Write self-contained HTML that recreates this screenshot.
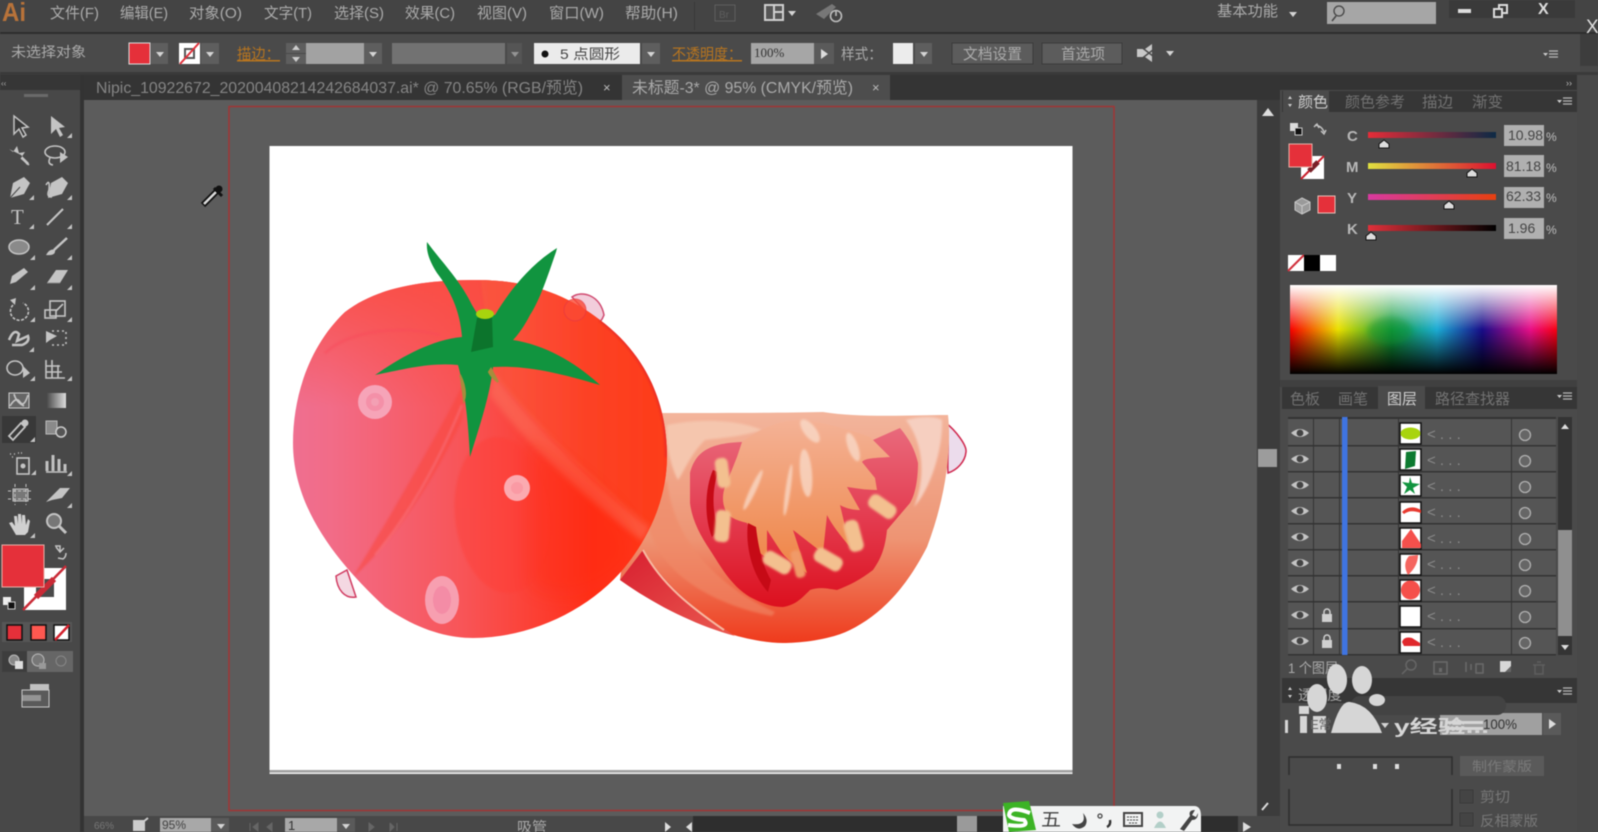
<!DOCTYPE html>
<html><head><meta charset="utf-8"><style>
html,body{margin:0;padding:0;background:#484848;overflow:hidden}
svg{display:block;width:1598px;height:832px;filter:blur(.5px)}
text{font-family:"Liberation Sans","Noto Sans CJK SC",sans-serif}
.m{fill:#ababab;font-size:15px}
.o{fill:#b8751f;font-size:15px;text-decoration:underline}
.p{fill:#727272;font-size:15px}
.i{stroke:#c4c4c4;stroke-width:1.6;fill:none}
.f{fill:#c4c4c4}
.lb{fill:#b8b8b8;font-size:15px;font-weight:bold;font-family:"Liberation Serif",serif}
.v{fill:#444;font-size:14px;font-family:"Liberation Mono",monospace}
.d{fill:#a0a0a0;font-size:16px}
</style></head><body>
<svg xmlns="http://www.w3.org/2000/svg" viewBox="0 0 1598 832" width="1598" height="832">
<defs>
<linearGradient id="body" x1="0" x2="1" y1="0" y2="0"><stop offset="0" stop-color="#ef6f90"/><stop offset=".1" stop-color="#f26c88"/><stop offset=".45" stop-color="#f85558"/><stop offset=".8" stop-color="#ff2f18"/><stop offset="1" stop-color="#ff3a18"/></linearGradient>
<linearGradient id="lobe" x1="0" x2="1" y1="0" y2="0"><stop offset="0" stop-color="#fa5a40"/><stop offset="1" stop-color="#fd3c18"/></linearGradient>
<linearGradient id="topfade" x1="0" x2="0" y1="0" y2="1"><stop offset="0" stop-color="#fb4c40" stop-opacity=".85"/><stop offset="1" stop-color="#fb4c40" stop-opacity="0"/></linearGradient>
<linearGradient id="slice" x1="0" x2="0" y1="0" y2="1"><stop offset="0" stop-color="#f3b59c"/><stop offset=".55" stop-color="#ee9473"/><stop offset="1" stop-color="#ef3a1c"/></linearGradient>
<linearGradient id="flesh" x1="0" x2="0" y1="0" y2="1"><stop offset="0" stop-color="#e96a7c"/><stop offset=".5" stop-color="#e43c50"/><stop offset="1" stop-color="#dc101e"/></linearGradient>
<linearGradient id="core" x1="0" x2="0" y1="0" y2="1"><stop offset="0" stop-color="#f4b296"/><stop offset="1" stop-color="#ef8444"/></linearGradient>
<linearGradient id="rim" x1="0" x2="1" y1="0" y2="1"><stop offset="0" stop-color="#d81f30"/><stop offset="1" stop-color="#ea5a50"/></linearGradient>
<linearGradient id="rb" x1="0" x2="1" y1="0" y2="0"><stop offset="0" stop-color="#f80000"/><stop offset=".18" stop-color="#eae000"/><stop offset=".38" stop-color="#109a3a"/><stop offset=".55" stop-color="#1cacd4"/><stop offset=".72" stop-color="#180c88"/><stop offset=".9" stop-color="#e80f88"/><stop offset="1" stop-color="#f80010"/></linearGradient>
<linearGradient id="wh" x1="0" x2="0" y1="0" y2="1"><stop offset="0" stop-color="#fff"/><stop offset=".5" stop-color="#fff" stop-opacity="0"/></linearGradient>
<linearGradient id="bk" x1="0" x2="0" y1="0" y2="1"><stop offset=".5" stop-color="#000" stop-opacity="0"/><stop offset="1" stop-color="#000"/></linearGradient>
<linearGradient id="sC" x1="0" x2="1"><stop offset="0" stop-color="#e62c38"/><stop offset="1" stop-color="#0d2a45"/></linearGradient>
<linearGradient id="sM" x1="0" x2="1"><stop offset="0" stop-color="#e0e040"/><stop offset="1" stop-color="#dd1030"/></linearGradient>
<linearGradient id="sY" x1="0" x2="1"><stop offset="0" stop-color="#d83aa0"/><stop offset="1" stop-color="#e64010"/></linearGradient>
<linearGradient id="sK" x1="0" x2="1"><stop offset="0" stop-color="#e0303a"/><stop offset="1" stop-color="#000"/></linearGradient>
<linearGradient id="gr" x1="0" x2="1"><stop offset="0" stop-color="#444"/><stop offset="1" stop-color="#ddd"/></linearGradient>
<filter id="b3" x="-30%" y="-30%" width="160%" height="160%"><feGaussianBlur stdDeviation="3"/></filter>
<filter id="b1" x="-30%" y="-30%" width="160%" height="160%"><feGaussianBlur stdDeviation="1"/></filter>
<filter id="b8" x="-30%" y="-30%" width="160%" height="160%"><feGaussianBlur stdDeviation="8"/></filter>
<clipPath id="cb"><path d="M477 280C430 280 380 285 345 312C310 345 293 395 293 443C293 510 340 565 385 607C415 628 445 638 473 638C530 638 590 610 625 567C655 530 667 490 667 457C667 395 640 350 600 320C565 293 525 280 477 280Z"/></clipPath>
<clipPath id="cv"><rect x="1504" y="120" width="40" height="125"/></clipPath>
<path id="t" d="M0 5L5 0V5Z" fill="#c4c4c4"/>
<g id="eye"><path d="M-9 0Q0 -8 9 0Q0 8 -9 0Z" fill="#c4c4c4"/><circle r="3.4" fill="#444"/></g>
<g id="rad"><circle r="5.500" fill="#666" stroke="#b0b0b0" stroke-width="1.3"/></g>
<g id="lk"><rect x="-5" y="-2" width="10" height="8" fill="#d0d0d0"/><path d="M-3 -2V-4A3 3 0 0 1 3 -4V-2" stroke="#d0d0d0" stroke-width="1.500" fill="none"/></g>
<path id="dn" d="M-4 -2H4L0 3Z" fill="#d4d4d4"/>
<g id="mn"><path d="M-9 -2H-4L-6.5 1Z" fill="#ccc"/><path d="M-3 -4H6M-3 -1H6M-3 2H6" stroke="#b8b8b8" stroke-width="1.2"/></g>
</defs>

<!-- base -->
<rect width="1598" height="832" fill="#484848"/>
<rect width="1598" height="33" fill="#444"/>
<rect y="32" width="1598" height="2" fill="#2e2e2e"/>
<rect y="34" width="1580" height="40" fill="#4a4a4a"/>
<rect y="72" width="1598" height="3" fill="#3a3a3a"/>
<rect x="1580" y="34" width="18" height="32" fill="#3d3d3d"/>

<!-- menu -->
<text x="2" y="21" font-size="26" fill="#b8733a" font-weight="bold" textLength="24" lengthAdjust="spacingAndGlyphs">Ai</text>
<g class="m">
<text x="50" y="18" textLength="49" lengthAdjust="spacingAndGlyphs">文件(F)</text>
<text x="120" y="18" textLength="48" lengthAdjust="spacingAndGlyphs">编辑(E)</text>
<text x="189" y="18" textLength="53" lengthAdjust="spacingAndGlyphs">对象(O)</text>
<text x="264" y="18" textLength="48" lengthAdjust="spacingAndGlyphs">文字(T)</text>
<text x="334" y="18" textLength="50" lengthAdjust="spacingAndGlyphs">选择(S)</text>
<text x="405" y="18" textLength="50" lengthAdjust="spacingAndGlyphs">效果(C)</text>
<text x="477" y="18" textLength="50" lengthAdjust="spacingAndGlyphs">视图(V)</text>
<text x="549" y="18" textLength="55" lengthAdjust="spacingAndGlyphs">窗口(W)</text>
<text x="625" y="18" textLength="53" lengthAdjust="spacingAndGlyphs">帮助(H)</text>
</g>
<rect x="694" y="2" width="1" height="28" fill="#383838"/>
<rect x="715" y="5" width="20" height="16" fill="none" stroke="#5e5e5e"/>
<text x="719" y="18" font-size="10" fill="#5e5e5e">Br</text>
<rect x="764" y="4" width="20" height="17" fill="#cfcfcf"/><rect x="766" y="6" width="7" height="13" fill="#555"/><rect x="775" y="6" width="7" height="5" fill="#555"/><rect x="775" y="13" width="7" height="6" fill="#555"/>
<use href="#dn" x="792" y="13"/>
<path d="M816 14L832 4L836 7L824 19Z" fill="#777"/><circle cx="836" cy="16" r="5.5" fill="none" stroke="#bdbdbd" stroke-width="1.6"/><path d="M836 10V16" stroke="#bdbdbd" stroke-width="1.6"/>
<text x="1217" y="16" class="m" textLength="61" lengthAdjust="spacingAndGlyphs">基本功能</text>
<use href="#dn" x="1293" y="14"/>
<rect x="1327" y="2" width="109" height="22" fill="#a6a6a6"/>
<circle cx="1339" cy="11" r="5" fill="none" stroke="#444" stroke-width="1.3"/><path d="M1336 16L1332 21" stroke="#444" stroke-width="1.5"/>
<rect x="1449" y="0" width="126" height="18" fill="#3a3a3a"/>
<rect x="1458" y="9" width="13" height="4" fill="#ddd"/>
<rect x="1499" y="5" width="8" height="8" fill="none" stroke="#ddd" stroke-width="2"/><rect x="1494" y="9" width="8" height="8" fill="#3a3a3a" stroke="#ddd" stroke-width="2"/>
<text x="1538" y="14" font-size="16" fill="#ddd" font-weight="bold">X</text>
<text x="1586" y="33" font-size="19" fill="#ddd">X</text>

<!-- options -->
<text x="11" y="57" class="m" textLength="75" lengthAdjust="spacingAndGlyphs" style="font-size:14px">未选择对象</text>
<rect x="129" y="43" width="21" height="21" fill="#e5303a" stroke="#ddd"/>
<rect x="151" y="43" width="17" height="21" fill="#5e5e5e"/><use href="#dn" x="160" y="54"/>
<rect x="179" y="43" width="21" height="21" fill="#fff"/>
<rect x="185" y="49" width="9" height="9" fill="none" stroke="#555" stroke-width="2"/><path d="M180 64L199 43" stroke="#e0303a" stroke-width="2"/>
<rect x="201" y="43" width="18" height="21" fill="#5e5e5e"/><use href="#dn" x="210" y="54"/>
<text x="237" y="59" class="o" textLength="43" lengthAdjust="spacingAndGlyphs">描边：</text>
<rect x="286" y="43" width="20" height="10" fill="#5e5e5e"/><rect x="286" y="54" width="20" height="10" fill="#5e5e5e"/>
<path d="M292 50L296 45L300 50Z" fill="#ccc"/><path d="M292 57L296 62L300 57Z" fill="#ccc"/>
<rect x="306" y="43" width="58" height="21" fill="#a2a2a2"/>
<rect x="364" y="43" width="18" height="21" fill="#5e5e5e"/><use href="#dn" x="373" y="54"/>
<rect x="392" y="43" width="113" height="21" fill="#727272"/>
<rect x="507" y="43" width="15" height="21" fill="#555"/><use href="#dn" x="515" y="54" opacity=".5"/>
<rect x="534" y="43" width="106" height="21" fill="#ebebeb"/>
<circle cx="545" cy="54" r="3.5" fill="#111"/>
<text x="560" y="59" font-size="14" fill="#444" textLength="60" lengthAdjust="spacingAndGlyphs">5 点圆形</text>
<rect x="642" y="43" width="18" height="21" fill="#5e5e5e"/><use href="#dn" x="651" y="54"/>
<text x="672" y="59" class="o" textLength="70" lengthAdjust="spacingAndGlyphs">不透明度：</text>
<rect x="751" y="43" width="63" height="21" fill="#a6a6a6"/>
<text x="754" y="57" font-size="13" fill="#333" style="font-family:'Liberation Serif',serif">100%</text>
<rect x="814" y="43" width="20" height="21" fill="#5a5a5a"/><path d="M821 49L828 54L821 59Z" fill="#ddd"/>
<text x="841" y="59" class="m" textLength="41" lengthAdjust="spacingAndGlyphs">样式：</text>
<rect x="893" y="43" width="20" height="21" fill="#ececec"/>
<rect x="915" y="43" width="17" height="21" fill="#5e5e5e"/><use href="#dn" x="924" y="54"/>
<rect x="952" y="43" width="81" height="21" fill="#5c5c5c" stroke="#3a3a3a"/>
<text x="963" y="59" class="m" textLength="59" lengthAdjust="spacingAndGlyphs">文档设置</text>
<rect x="1042" y="43" width="80" height="21" fill="#5c5c5c" stroke="#3a3a3a"/>
<text x="1061" y="59" class="m" textLength="44" lengthAdjust="spacingAndGlyphs">首选项</text>
<path d="M1137 49H1145L1152 44V62L1145 57H1137Z" fill="#c8c8c8"/><path d="M1140 46L1158 60M1158 46L1140 60" stroke="#4a4a4a" stroke-width="1.5"/>
<use href="#dn" x="1170" y="53"/>
<use href="#mn" x="1552" y="55"/>

<!-- toolbar column -->
<rect x="0" y="75" width="80" height="757" fill="#484848"/>
<rect x="0" y="75" width="80" height="15" fill="#363636"/>
<text x="1" y="86" font-size="8" fill="#aaa">‹‹</text>
<rect x="24" y="94" width="24" height="3" fill="#6a6a6a"/>
<rect x="80" y="75" width="4" height="757" fill="#333"/>

<!-- tabs -->
<rect x="84" y="75" width="1196" height="26" fill="#343434"/>
<text x="96" y="93" class="d" style="fill:#858585" textLength="487" lengthAdjust="spacingAndGlyphs">Nipic_10922672_20200408214242684037.ai* @ 70.65% (RGB/预览)</text>
<text x="603" y="92" font-size="13" fill="#bbb">×</text>
<rect x="622" y="75" width="268" height="25" fill="#4d4d4d"/>
<text x="632" y="93" class="d" textLength="221" lengthAdjust="spacingAndGlyphs" style="fill:#aaa">未标题-3* @ 95% (CMYK/预览)</text>
<text x="872" y="92" font-size="13" fill="#bbb">×</text>

<!-- canvas -->
<rect x="84" y="100" width="1173" height="716" fill="#5c5c5c"/>
<rect x="229" y="106.5" width="885" height="704" fill="none" stroke="#a23434" stroke-width="1.5"/>
<rect x="269.5" y="146" width="803" height="625" fill="#fff"/>
<rect x="269.5" y="770" width="803" height="2.5" fill="#a0a0a0"/>
<rect x="269.5" y="772.5" width="803" height="1.5" fill="#eee"/>

<!-- slice -->
<path d="M946 423C955 430 967 445 966 452C965 462 957 470 948 473C947 455 950 440 946 423Z" fill="#ecdcec" stroke="#d02a50" stroke-width="1.5"/>
<path d="M640 413L665 413C720 413 780 413 823 412C860 418 910 415 948 415C952 450 945 500 927 547C905 590 880 615 850 630C830 640 800 643 783 643C745 643 680 622 620 580Z" fill="url(#slice)"/>
<path d="M620 580L643 550C665 585 695 610 735 636C695 625 655 605 620 580Z" fill="url(#rim)"/>
<path d="M643 550C662 585 692 608 724 630" stroke="#f7b8a0" stroke-width="2" fill="none"/>
<path d="M667 480C672 530 705 580 775 612L772 616C715 605 660 575 648 525C650 505 660 490 667 480Z" fill="#f08a68" opacity=".6" filter="url(#b1)"/>
<path d="M667 425C700 418 740 420 762 430C740 437 720 438 705 440C690 455 685 470 678 480C670 465 665 440 667 425Z" fill="#f5c6ae" filter="url(#b1)"/>
<path d="M906 420C920 416 935 416 942 420C943 450 930 490 914 507C925 480 925 445 906 420Z" fill="#f6cfc0" filter="url(#b1)"/>
<path d="M690 473C695 455 705 443 742 442C780 420 840 430 873 440L900 428C910 440 915 450 918 463C918 480 915 495 910 503L887 530C885 550 880 560 873 570C860 580 850 585 837 590C825 588 818 587 810 590C800 600 795 605 783 607C770 607 760 602 750 597C730 585 720 565 710 550C700 535 692 520 690 503Z" fill="url(#flesh)"/>
<path d="M742 442C765 425 785 420 800 420C825 422 850 430 870 437L890 457C875 458 865 458 862 462L875 478L877 490C865 490 855 488 847 487L860 510C852 510 845 508 840 505L850 547C840 535 832 525 827 515L823 553C812 545 800 535 793 530L807 573C795 565 785 558 780 550L767 530L767 557C760 555 758 550 757 547L747 523C735 520 730 517 727 513C722 505 722 495 725 487L737 457Z" fill="url(#core)"/>
<path d="M713 470C706 485 703 515 712 537L718 530C712 510 712 490 718 472Z" fill="#c60a16"/>
<path d="M748 523C745 545 752 575 768 592L771 580C762 565 758 545 756 527Z" fill="#c60a16"/>
<g fill="#f3c08f" filter="url(#b1)">
<rect x="716" y="458" width="13" height="30" rx="5" transform="rotate(-8 722 472)"/>
<rect x="715" y="510" width="15" height="32" rx="5" transform="rotate(5 722 525)"/>
<rect x="762" y="555" width="30" height="15" rx="6" transform="rotate(30 777 563)"/>
<rect x="793" y="550" width="10" height="28" rx="4" transform="rotate(-15 798 564)" fill="#f09a68"/>
<rect x="813" y="552" width="30" height="15" rx="6" transform="rotate(30 828 560)"/>
<rect x="846" y="520" width="15" height="32" rx="6" transform="rotate(-15 853 535)"/>
<rect x="867" y="499" width="30" height="15" rx="6" transform="rotate(35 882 507)"/>
</g>
<g fill="#f9dccb" opacity=".75" filter="url(#b1)">
<ellipse cx="810" cy="431" rx="6" ry="14" transform="rotate(-38 810 431)"/>
<ellipse cx="806" cy="473" rx="6" ry="24" transform="rotate(-5 806 473)"/>
<ellipse cx="753" cy="490" rx="3" ry="22" transform="rotate(25 753 490)"/>
<ellipse cx="788" cy="490" rx="2.5" ry="26" transform="rotate(8 788 490)"/>
<ellipse cx="853" cy="447" rx="5" ry="15" transform="rotate(-20 853 447)"/>
</g>

<!-- tomato -->
<path d="M572 297C582 290 600 295 604 315C602 320 600 323 597 324Z" fill="#f2cddb" stroke="#d04a70" stroke-width="1.5"/>
<path d="M336 576C337 590 345 599 356 597L347 570Z" fill="#f4d8e2" stroke="#d03a60" stroke-width="1.5"/>
<path d="M477 280C430 280 380 285 345 312C310 345 293 395 293 443C293 510 340 565 385 607C415 628 445 638 473 638C530 638 590 610 625 567C655 530 667 490 667 457C667 395 640 350 600 320C565 293 525 280 477 280Z" fill="url(#body)"/>
<g clip-path="url(#cb)">
<rect x="290" y="278" width="220" height="130" fill="url(#topfade)"/>
<path d="M480 275H680V530L650 527C600 490 530 420 493 373Z" fill="url(#lobe)" opacity=".7" filter="url(#b1)"/>
<path d="M493 373C530 420 600 490 650 527C648 532 645 537 642 541C600 510 530 450 490 395Z" fill="#fb7860" opacity=".5" filter="url(#b3)"/>
<path d="M325 353C350 330 400 325 440 335" stroke="#f8485a" stroke-width="2" fill="none" opacity=".6" filter="url(#b1)"/>
<path d="M467 377C440 430 400 500 353 577C385 550 430 490 462 420Z" fill="#f9463e" opacity=".55" filter="url(#b1)"/>
<path d="M462 405C435 470 405 520 375 555" stroke="#f97a88" stroke-width="2" fill="none" opacity=".6" filter="url(#b1)"/>
<ellipse cx="502" cy="515" rx="47" ry="78" fill="#ff3c34" opacity=".4" transform="rotate(-6 502 515)" filter="url(#b1)"/>
<path d="M530 440C600 490 640 520 632 560C610 590 560 610 530 585Z" fill="#ff2a10" opacity=".35" filter="url(#b8)"/>
<path d="M600 320C640 350 667 395 667 457" stroke="#d82030" stroke-width="3" fill="none" opacity=".6" filter="url(#b1)"/>
</g>
<circle cx="575" cy="310" r="11" fill="#fb4a34" stroke="#ea3a40" stroke-width="1" opacity=".8"/>
<circle cx="375" cy="402" r="17" fill="#f6a4b8"/><circle cx="375" cy="402" r="9" fill="#f490a8"/><circle cx="375" cy="402" r="4" fill="#f3a0b4"/>
<circle cx="517" cy="488" r="13" fill="#fbaab0"/><circle cx="517" cy="488" r="6" fill="#fa9aa4"/>
<ellipse cx="442" cy="600" rx="17" ry="24" fill="#f79fb0"/><ellipse cx="442" cy="600" rx="9" ry="14" fill="#f48ca6"/>
<path d="M427 242C440 260 460 280 472 305L478 315H495C510 290 530 265 557 248L556 252C548 275 540 300 530 315C525 325 518 335 513 340C545 345 575 362 600 385C565 375 530 365 493 367C490 395 480 425 470 457C468 420 465 390 458 365C430 362 400 370 375 375C400 358 430 340 462 337C460 310 450 290 437 273C430 262 426 252 427 242Z" fill="#11943f"/>
<path d="M460 375C465 385 466 395 464 400L461 378ZM489 372C492 378 496 380 498 382L491 369Z" fill="#a88c3c" stroke="#a88c3c" stroke-width="2"/>
<path d="M477 318L492 316L493 347L471 352Z" fill="#0c742c"/>
<ellipse cx="485" cy="314" rx="9" ry="5" fill="#a8d40e"/>

<!-- cursor -->
<path d="M203 205L217 191" stroke="#111" stroke-width="6"/><path d="M204 204L216 192" stroke="#ddd" stroke-width="2.5"/><path d="M214 188L222 196" stroke="#111" stroke-width="3"/><circle cx="219" cy="189" r="3.5" fill="#111"/>

<!-- tools -->
<path d="M14 116V134L19 129L23 137L26 135L22 128L28 127Z" fill="#3a3a3a" stroke="#c4c4c4" stroke-width="1.5"/>
<path d="M51 116V134L56 129L60 137L63 135L59 128L65 127Z" class="f"/><use href="#t" x="67" y="133"/>
<path d="M9 149L13 152L17 146L19 153L25 152L21 158L27 165L29 163L21 155" class="f"/><path d="M21 158L29 165" class="i"/>
<ellipse cx="55" cy="152" rx="10" ry="6" class="i"/><path d="M60 152V163L68 157Z" class="f"/><path d="M50 158Q47 164 53 165" class="i"/>
<path d="M10 198L13 183L24 177L30 183L24 194Z" class="f"/><path d="M10 198L20 187" stroke="#444"/><use href="#t" x="29" y="195"/>
<path d="M48 198L51 183L62 177L68 183L62 194Z" class="f"/><path d="M46 185Q50 178 49 190Q46 197 52 197" class="i"/><use href="#t" x="67" y="195"/>
<text x="11" y="224" font-size="21" fill="#c4c4c4" style="font-family:'Liberation Serif',serif">T</text><use href="#t" x="29" y="224"/>
<path d="M47 225L63 209" stroke="#c4c4c4" stroke-width="2"/><use href="#t" x="67" y="224"/>
<ellipse cx="19" cy="247" rx="10" ry="7" fill="#8a8a8a" stroke="#c4c4c4" stroke-width="1.5"/><use href="#t" x="30" y="255"/>
<path d="M67 238L54 250" stroke="#c4c4c4" stroke-width="2.5"/><path d="M46 255Q50 248 55 250Q56 256 46 255Z" class="f"/><use href="#t" x="67" y="255"/>
<path d="M10 284L12 276L24 268L28 272L16 282Z" class="f"/><use href="#t" x="30" y="285"/>
<path d="M47 283L56 270H68L60 283Z" class="f"/><path d="M47 283H60" stroke="#888"/><use href="#t" x="67" y="285"/>
<path d="M13 305A9 9 0 1 0 23 303" stroke-dasharray="3 1.5" class="i"/><path d="M10 300L16 298L15 305Z" class="f"/><use href="#t" x="30" y="317"/>
<rect x="50" y="301" width="15" height="15" class="i"/><rect x="45" y="310" width="11" height="8" class="i"/><path d="M56 311L63 304" class="i"/><use href="#t" x="67" y="317"/>
<path d="M9 340Q14 328 19 334L17 341L28 336Q30 342 22 345H12" class="i" style="stroke-width:2.5"/><use href="#t" x="29" y="347"/>
<path d="M46 331V343L50 340L57 336Z" class="f"/><path d="M52 331H66V345H52" stroke-dasharray="2 3" class="i"/>
<ellipse cx="15" cy="368" rx="8" ry="7" class="i"/><path d="M23 366V378L30 373Z" class="f"/><use href="#t" x="30" y="376"/>
<path d="M46 360V378H65M46 366H60M46 372H62M52 360V378M58 365V378" class="i"/><use href="#t" x="67" y="376"/>
<rect x="9" y="393" width="20" height="15" fill="#666" stroke="#ccc"/><path d="M10 406Q16 396 20 402T28 395M14 394Q16 402 24 406" class="i"/>
<rect x="46" y="393" width="20" height="15" fill="url(#gr)"/>
<rect x="2" y="416" width="34" height="27" fill="#383838"/>
<path d="M11 438L9 436L21 423L25 427L13 440Z" fill="none" stroke="#c4c4c4" stroke-width="1.8"/><circle cx="25" cy="423" r="3.5" class="f"/><use href="#t" x="30" y="437"/>
<rect x="46" y="421" width="11" height="13" fill="#8a8a8a" stroke="#bbb"/><circle cx="61" cy="432" r="5" fill="#555" stroke="#ccc" stroke-width="1.5"/>
<rect x="17" y="458" width="12" height="16" class="i"/><circle cx="23" cy="466" r="2.5" class="f"/><path d="M10 454h1M14 454h1M12 457h1M18 453h6" class="i" stroke-dasharray="1 2"/><use href="#t" x="31" y="470"/>
<path d="M47 471V461M53 471V455M59 471V459M65 471V464" stroke="#c0c0c0" stroke-width="3"/><path d="M46 472H67" class="i"/><use href="#t" x="67" y="471"/>
<rect x="13" y="489" width="15" height="12" fill="#777" stroke="#c4c4c4"/><path d="M8 491H32M8 499H32M15 484V505M26 484V505" class="i" style="stroke-width:1" stroke-dasharray="3 2"/>
<path d="M46 502L60 488H70L62 498L52 500Z" class="f"/><use href="#t" x="67" y="503"/>
<path d="M16 535L9 523L12 522L15 526L14 516H17L18 524V514H21L22 524V515H25L26 525L28 519L30 521L28 532L25 535Z" fill="#d0d0d0"/><use href="#t" x="30" y="533"/>
<circle cx="54" cy="521" r="7" fill="#777" stroke="#c4c4c4" stroke-width="2"/><path d="M59 526L66 533" stroke="#c4c4c4" stroke-width="3"/>
<!-- color box -->
<rect x="24" y="568" width="42" height="42" fill="#fff"/><rect x="36" y="579" width="18" height="18" fill="#4a4a4a"/>
<path d="M23 610L66 566" stroke="#c92a36" stroke-width="2.5"/><path d="M36 597L54 579" stroke="#c92a36" stroke-width="6"/>
<rect x="2" y="545" width="42" height="42" fill="#e5303a" stroke="#e8b0a8" stroke-width="1"/>
<path d="M56 547L60 552L64 548M60 552V546H55M58 558L63 559Q66 557 66 553" class="i" style="stroke-width:1.5"/>
<rect x="3" y="597" width="8" height="8" fill="#eee"/><rect x="8" y="602" width="7" height="7" fill="#111" stroke="#ccc"/>
<rect x="2" y="622" width="70" height="20" fill="#565656"/>
<rect x="7" y="625" width="15" height="15" fill="#e5303a" stroke="#111" stroke-width="1.5"/>
<rect x="31" y="625" width="15" height="15" fill="#ff5850" stroke="#111" stroke-width="1.5"/>
<rect x="54" y="625" width="15" height="15" fill="#fff" stroke="#111" stroke-width="1.5"/><path d="M55 640L69 625" stroke="#d4202c" stroke-width="2.5"/>
<rect x="2" y="651" width="25" height="21" fill="#3d3d3d"/><rect x="27" y="651" width="46" height="21" fill="#666"/>
<circle cx="14" cy="660" r="5" fill="#888" stroke="#bbb"/><rect x="15" y="661" width="8" height="8" fill="#ddd"/>
<circle cx="38" cy="660" r="6" fill="#777" stroke="#bbb"/><rect x="39" y="663" width="7" height="6" fill="#999"/>
<circle cx="61" cy="661" r="5" fill="none" stroke="#888"/>
<rect x="22" y="690" width="27" height="17" fill="#5a5a5a" stroke="#c8c8c8"/><rect x="30" y="684" width="19" height="6" fill="#c0c0c0"/><rect x="22" y="695" width="19" height="6" fill="#bbb" opacity=".6"/>

<!-- vscroll -->
<rect x="1257" y="100" width="23" height="716" fill="#3c3c3c"/>
<path d="M1262 116L1268 108L1274 116Z" fill="#ddd"/>
<rect x="1258" y="449" width="19" height="18" fill="#9c9c9c"/>
<path d="M1262 810L1268 803" stroke="#ddd" stroke-width="2"/>

<!-- status bar -->
<rect x="84" y="816" width="1173" height="16" fill="#484848"/>
<text x="94" y="829" font-size="10" fill="#777">66%</text>
<rect x="133" y="820" width="12" height="11" fill="#ccc"/><path d="M138 826L148 818" stroke="#ccc" stroke-width="2"/>
<rect x="160" y="818" width="51" height="14" fill="#a8a8a8"/><text x="162" y="829" font-size="12" fill="#444">95%</text>
<rect x="211" y="818" width="18" height="14" fill="#5a5a5a"/><use href="#dn" x="221" y="826"/>
<path d="M250 823V831M253 827L258 823V831ZM272 823L267 827L272 831Z" fill="#666" stroke="#666"/>
<rect x="285" y="818" width="52" height="14" fill="#a8a8a8"/><text x="288" y="830" font-size="13" fill="#333">1</text>
<rect x="337" y="818" width="18" height="14" fill="#5a5a5a"/><use href="#dn" x="346" y="826"/>
<path d="M369 823L374 827L369 831ZM390 823L394 827L390 831V823M397 823V831" fill="#666" stroke="#666"/>
<text x="517" y="832" font-size="14" fill="#aaa" textLength="30" lengthAdjust="spacingAndGlyphs">吸管</text>
<path d="M665 822L671 827L665 832Z" fill="#ddd"/><path d="M692 822L686 827L692 832Z" fill="#ddd"/>
<rect x="693" y="816" width="310" height="16" fill="#2e2e2e"/><rect x="957" y="816" width="20" height="16" fill="#9a9a9a"/>
<rect x="1200" y="816" width="38" height="16" fill="#2e2e2e"/>
<path d="M1243 822L1251 827L1243 832Z" fill="#ddd"/>

<!-- IME -->
<path d="M1003 806H1194Q1201 806 1201 816V832H1003Z" fill="#f2f3f3"/>
<path d="M1003 803L1029 801L1036 830L1009 832Z" fill="#3cb325"/>
<path d="M1030 813Q1010 805 1009 815Q1010 819 1024 820Q1031 828 1008 825" fill="none" stroke="#fff" stroke-width="4"/>
<text x="1041" y="826" font-size="18" fill="#444" textLength="20" lengthAdjust="spacingAndGlyphs">五</text>
<path d="M1083 813Q1087 826 1072 824Q1078 832 1085 826Q1089 820 1083 813Z" fill="#444"/>
<circle cx="1100" cy="816" r="2" fill="none" stroke="#444" stroke-width="1.3"/><path d="M1110 820Q1111 825 1107 827" stroke="#333" stroke-width="2.4" fill="none"/>
<rect x="1124" y="813" width="18" height="13" fill="none" stroke="#444" stroke-width="2"/><path d="M1127 817H1139M1127 820H1139M1129 823H1137" stroke="#444" stroke-dasharray="2 1"/>
<circle cx="1160" cy="815" r="3.5" fill="#b2cfc8"/><path d="M1154 828Q1160 815 1166 828Z" fill="#b2cfc8"/>
<path d="M1180 829L1190 816Q1188 810 1195 810L1192 815L1196 817L1198 813Q1198 820 1192 820L1184 831Z" fill="#444"/>

<!-- right panels -->
<rect x="1280" y="75" width="297" height="757" fill="#4a4a4a"/>
<rect x="1280" y="75" width="297" height="15" fill="#333"/>
<text x="1566" y="86" font-size="9" fill="#bbb">››</text>
<rect x="1282" y="91" width="295" height="21" fill="#363636"/>
<rect x="1283" y="90" width="46" height="22" fill="#4a4a4a"/>
<path d="M1288 99L1290 96L1292 99ZM1288 104L1290 107L1292 104Z" fill="#ccc"/>
<text x="1298" y="107" font-size="15" fill="#d0d0d0" textLength="30" lengthAdjust="spacingAndGlyphs">颜色</text>
<g class="p">
<text x="1345" y="107" textLength="60" lengthAdjust="spacingAndGlyphs">颜色参考</text>
<text x="1422" y="107" textLength="31" lengthAdjust="spacingAndGlyphs">描边</text>
<text x="1472" y="107" textLength="31" lengthAdjust="spacingAndGlyphs">渐变</text>
</g>
<use href="#mn" x="1566" y="102"/>

<rect x="1290" y="123" width="8" height="8" fill="#ddd"/><rect x="1295" y="128" width="7" height="7" fill="#111" stroke="#ccc"/>
<path d="M1314 127L1317 124L1319 128M1315 125Q1322 126 1324 132M1326 130L1324 134L1321 131" class="i" style="stroke-width:1.4"/>
<rect x="1301" y="156" width="23" height="23" fill="#fff"/><path d="M1301 179L1324 156" stroke="#c8202c" stroke-width="2"/><path d="M1309 171L1318 162" stroke="#7a2028" stroke-width="5"/>
<rect x="1289" y="144" width="23" height="23" fill="#e5303a" stroke="#e8b0a8"/>
<path d="M1302 198L1310 202V210L1302 214L1295 210V202Z" fill="#9a9a9a" stroke="#c8c8c8"/><path d="M1295 202L1302 206L1310 202M1302 206V214" stroke="#c8c8c8" fill="none"/>
<rect x="1318" y="196" width="17" height="17" fill="#e5303a" stroke="#e8c0b8"/>
<g class="lb"><text x="1347" y="141">C</text><text x="1346" y="172">M</text><text x="1347" y="203">Y</text><text x="1347" y="234">K</text></g>
<rect x="1368" y="132" width="128" height="6" fill="url(#sC)"/>
<rect x="1368" y="163" width="128" height="6" fill="url(#sM)"/>
<rect x="1368" y="194" width="128" height="6" fill="url(#sY)"/>
<rect x="1368" y="225" width="128" height="6" fill="url(#sK)"/>
<g fill="#ddd" stroke="#111"><path d="M1379 148V144L1384 140L1389 144V148Z"/><path d="M1467 177V173L1472 169L1477 173V177Z"/><path d="M1444 209V205L1449 201L1454 205V209Z"/><path d="M1366 240V236L1371 232L1376 236V240Z"/></g>
<g fill="#b0b0b0"><rect x="1504" y="125" width="40" height="21"/><rect x="1504" y="155" width="40" height="22"/><rect x="1504" y="187" width="40" height="21"/><rect x="1504" y="218" width="40" height="21"/></g>
<g class="v" clip-path="url(#cv)"><text x="1508" y="140">10.98</text><text x="1506" y="171">81.18</text><text x="1506" y="201">62.33</text><text x="1508" y="233">1.96</text></g>
<g fill="#bfbfbf"><text x="1546" y="141" style="font-size:12px">%</text><text x="1546" y="172" style="font-size:12px">%</text><text x="1546" y="202" style="font-size:12px">%</text><text x="1546" y="234" style="font-size:12px">%</text></g>
<rect x="1288" y="255" width="16" height="16" fill="#fff"/><path d="M1288 271L1304 255" stroke="#d0303c" stroke-width="2"/>
<rect x="1304" y="255" width="16" height="16" fill="#000"/><rect x="1320" y="255" width="16" height="16" fill="#fff"/>
<rect x="1290" y="285" width="267" height="89" fill="url(#rb)"/>
<rect x="1290" y="285" width="267" height="89" fill="url(#wh)"/>
<rect x="1290" y="285" width="267" height="89" fill="url(#bk)"/>
<ellipse cx="1390" cy="331" rx="22" ry="13" fill="#0b8f30" opacity=".4" filter="url(#b3)"/>

<!-- layers -->
<rect x="1280" y="380" width="297" height="7" fill="#404040"/>
<rect x="1282" y="387" width="295" height="22" fill="#363636"/>
<rect x="1378" y="386" width="47" height="23" fill="#4a4a4a"/>
<g class="p">
<text x="1290" y="404" textLength="30" lengthAdjust="spacingAndGlyphs">色板</text>
<text x="1338" y="404" textLength="30" lengthAdjust="spacingAndGlyphs">画笔</text>
<text x="1435" y="404" textLength="75" lengthAdjust="spacingAndGlyphs">路径查找器</text>
</g>
<text x="1387" y="404" font-size="15" fill="#d0d0d0" textLength="30" lengthAdjust="spacingAndGlyphs">图层</text>
<use href="#mn" x="1566" y="397"/>
<rect x="1288" y="417" width="268" height="238" fill="#555"/>
<g fill="#333">
<rect x="1288" y="417" width="268" height="2"/><rect x="1288" y="445" width="268" height="1.5"/><rect x="1288" y="471" width="268" height="1.5"/><rect x="1288" y="497" width="268" height="1.5"/><rect x="1288" y="523" width="268" height="1.5"/><rect x="1288" y="549" width="268" height="1.5"/><rect x="1288" y="575" width="268" height="1.5"/><rect x="1288" y="601" width="268" height="1.5"/><rect x="1288" y="628" width="268" height="1.5"/><rect x="1288" y="654" width="268" height="1.5"/>
<rect x="1313" y="417" width="1" height="238"/><rect x="1339" y="417" width="1" height="238"/><rect x="1398" y="417" width="1" height="238"/><rect x="1511" y="417" width="1" height="238"/>
</g>
<rect x="1342" y="417" width="5.5" height="238" fill="#3f74e0"/>
<g>
<use href="#eye" x="1300" y="433"/><use href="#eye" x="1300" y="459"/><use href="#eye" x="1300" y="485"/><use href="#eye" x="1300" y="511"/><use href="#eye" x="1300" y="537"/><use href="#eye" x="1300" y="563"/><use href="#eye" x="1300" y="589"/><use href="#eye" x="1300" y="615"/><use href="#eye" x="1300" y="641"/>
<use href="#lk" x="1327" y="616"/><use href="#lk" x="1327" y="642"/>
<use href="#rad" x="1525" y="435"/><use href="#rad" x="1525" y="461"/><use href="#rad" x="1525" y="487"/><use href="#rad" x="1525" y="513"/><use href="#rad" x="1525" y="539"/><use href="#rad" x="1525" y="565"/><use href="#rad" x="1525" y="591"/><use href="#rad" x="1525" y="617"/><use href="#rad" x="1525" y="643"/>
</g>
<g fill="#fff" stroke="#111" stroke-width="1.5">
<rect x="1400" y="423" width="21" height="21"/><rect x="1400" y="449" width="21" height="21"/><rect x="1400" y="475" width="21" height="21"/><rect x="1400" y="502" width="21" height="21"/><rect x="1400" y="528" width="21" height="21"/><rect x="1400" y="554" width="21" height="21"/><rect x="1400" y="580" width="21" height="21"/><rect x="1400" y="606" width="21" height="21"/><rect x="1400" y="632" width="21" height="21"/>
</g>
<ellipse cx="1410.500" cy="433.500" rx="10" ry="6" fill="#a8d40e"/>
<path d="M1406 452L1416 451L1415 466L1405 469Z" fill="#0c7a30"/>
<path d="M1410 477L1412 483L1420 484L1413 488L1415 494L1410 490L1404 494L1407 487L1402 482L1409 483Z" fill="#11943f"/>
<path d="M1402 512Q1410 504 1421 510V513Q1410 509 1404 514Z" fill="#e83a30"/>
<path d="M1411 529L1421 544V548H1402V541Z" fill="#f5504c"/>
<path d="M1409 556L1418 555Q1418 566 1408 575Q1402 564 1409 556Z" fill="#f56660"/>
<circle cx="1410.500" cy="590" r="9.500" fill="#f5504a"/>
<path d="M1402 642Q1404 636 1412 638L1420 643V646H1404Z" fill="#e0282c"/>
<g>
<text x="1427" y="439" class="p" style="fill:#8a8a8a">&lt; . . .</text><text x="1427" y="465" class="p" style="fill:#8a8a8a">&lt; . . .</text><text x="1427" y="491" class="p" style="fill:#8a8a8a">&lt; . . .</text><text x="1427" y="517" class="p" style="fill:#8a8a8a">&lt; . . .</text><text x="1427" y="543" class="p" style="fill:#8a8a8a">&lt; . . .</text><text x="1427" y="569" class="p" style="fill:#8a8a8a">&lt; . . .</text><text x="1427" y="595" class="p" style="fill:#8a8a8a">&lt; . . .</text><text x="1427" y="621" class="p" style="fill:#8a8a8a">&lt; . . .</text><text x="1427" y="647" class="p" style="fill:#8a8a8a">&lt; . . .</text>
</g>
<rect x="1558" y="417" width="14" height="238" fill="#343434"/>
<rect x="1558" y="530" width="14" height="106" fill="#8f8f8f"/>
<path d="M1561 429L1565 424L1569 429Z" fill="#ddd"/><path d="M1561 645L1565 650L1569 645Z" fill="#ddd"/>
<text x="1288" y="673" font-size="14" fill="#aaa" textLength="50" lengthAdjust="spacingAndGlyphs">1 个图层</text>
<circle cx="1411" cy="665" r="5" fill="none" stroke="#666" stroke-width="1.5"/><path d="M1407 669L1402 674" stroke="#666" stroke-width="1.5"/>
<rect x="1434" y="662" width="13" height="12" fill="none" stroke="#6a6a6a" stroke-width="1.5"/><rect x="1439" y="668" width="3" height="4" fill="#6a6a6a"/>
<path d="M1466 662V672M1471 664V670M1476 664H1483V673H1476Z" stroke="#6a6a6a" fill="none" stroke-width="1.5"/>
<rect x="1500" y="661" width="11" height="11" fill="#d8d8d8"/><path d="M1505 672H1511V666Z" fill="#666"/>
<path d="M1533 665H1545M1535 665V674H1543V665M1537 662H1541" stroke="#5e5e5e" fill="none" stroke-width="1.5"/>

<!-- transparency -->
<rect x="1282" y="678" width="295" height="25" fill="#363636"/>
<path d="M1288 690L1290 687L1292 690ZM1288 695L1290 698L1292 695Z" fill="#ccc"/>
<text x="1298" y="700" font-size="14" fill="#a8a8a8" textLength="44" lengthAdjust="spacingAndGlyphs">透明度</text>
<use href="#mn" x="1566" y="692"/>
<rect x="1290" y="713" width="252" height="22" fill="#a0a0a0"/>
<rect x="1290" y="713" width="150" height="22" fill="#4a4a4a"/>
<rect x="1543" y="713" width="18" height="22" fill="#5a5a5a"/><path d="M1549 719L1556 724L1549 729Z" fill="#ddd"/>
<text x="1483" y="729" font-size="14" fill="#333" textLength="34" lengthAdjust="spacingAndGlyphs">100%</text>
<rect x="1351" y="696" width="155" height="19" rx="9" fill="#434343"/>
<!-- watermark -->
<g fill="#d6d6d6">
<ellipse cx="1337" cy="679" rx="10" ry="15" transform="rotate(-5 1337 679)"/>
<ellipse cx="1362" cy="680" rx="10" ry="14"/>
<ellipse cx="1317" cy="698" rx="10" ry="14"/>
<ellipse cx="1377" cy="700" rx="8" ry="6"/>
<path d="M1331 733Q1340 700 1350 702Q1372 705 1382 733Z"/>
<rect x="1299" y="706" width="10" height="8"/><rect x="1300" y="716" width="7" height="17"/>
<rect x="1285" y="720" width="3" height="13"/>
<rect x="1313" y="716" width="13" height="17"/>
<text x="1394" y="733" font-size="18" font-weight="bold" textLength="95" lengthAdjust="spacingAndGlyphs">y经验...</text>
<rect x="1445" y="721" width="38" height="3"/><rect x="1445" y="727" width="38" height="3"/>
</g>
<text x="1310" y="729" font-size="13" fill="#666">E常</text>
<use href="#dn" x="1385" y="725"/>
<!-- lower -->
<rect x="1289" y="757" width="163" height="68" fill="none" stroke="#2e2e2e" stroke-width="1.5"/>
<rect x="1283" y="775" width="190" height="14" fill="#4a4a4a"/>
<g fill="#ddd"><rect x="1337" y="764" width="4" height="5"/><rect x="1373" y="764" width="4" height="5"/><rect x="1395" y="764" width="4" height="5"/></g>
<rect x="1460" y="756" width="84" height="20" fill="#5a5a5a"/>
<text x="1472" y="771" font-size="13" fill="#7a7a7a" textLength="60" lengthAdjust="spacingAndGlyphs">制作蒙版</text>
<rect x="1460" y="790" width="13" height="13" fill="#444" stroke="#3a3a3a"/>
<rect x="1460" y="813" width="13" height="13" fill="#444" stroke="#3a3a3a"/>
<text x="1480" y="802" font-size="14" fill="#787878" textLength="30" lengthAdjust="spacingAndGlyphs">剪切</text>
<text x="1480" y="826" font-size="14" fill="#787878" textLength="58" lengthAdjust="spacingAndGlyphs">反相蒙版</text>
</svg>
</body></html>
